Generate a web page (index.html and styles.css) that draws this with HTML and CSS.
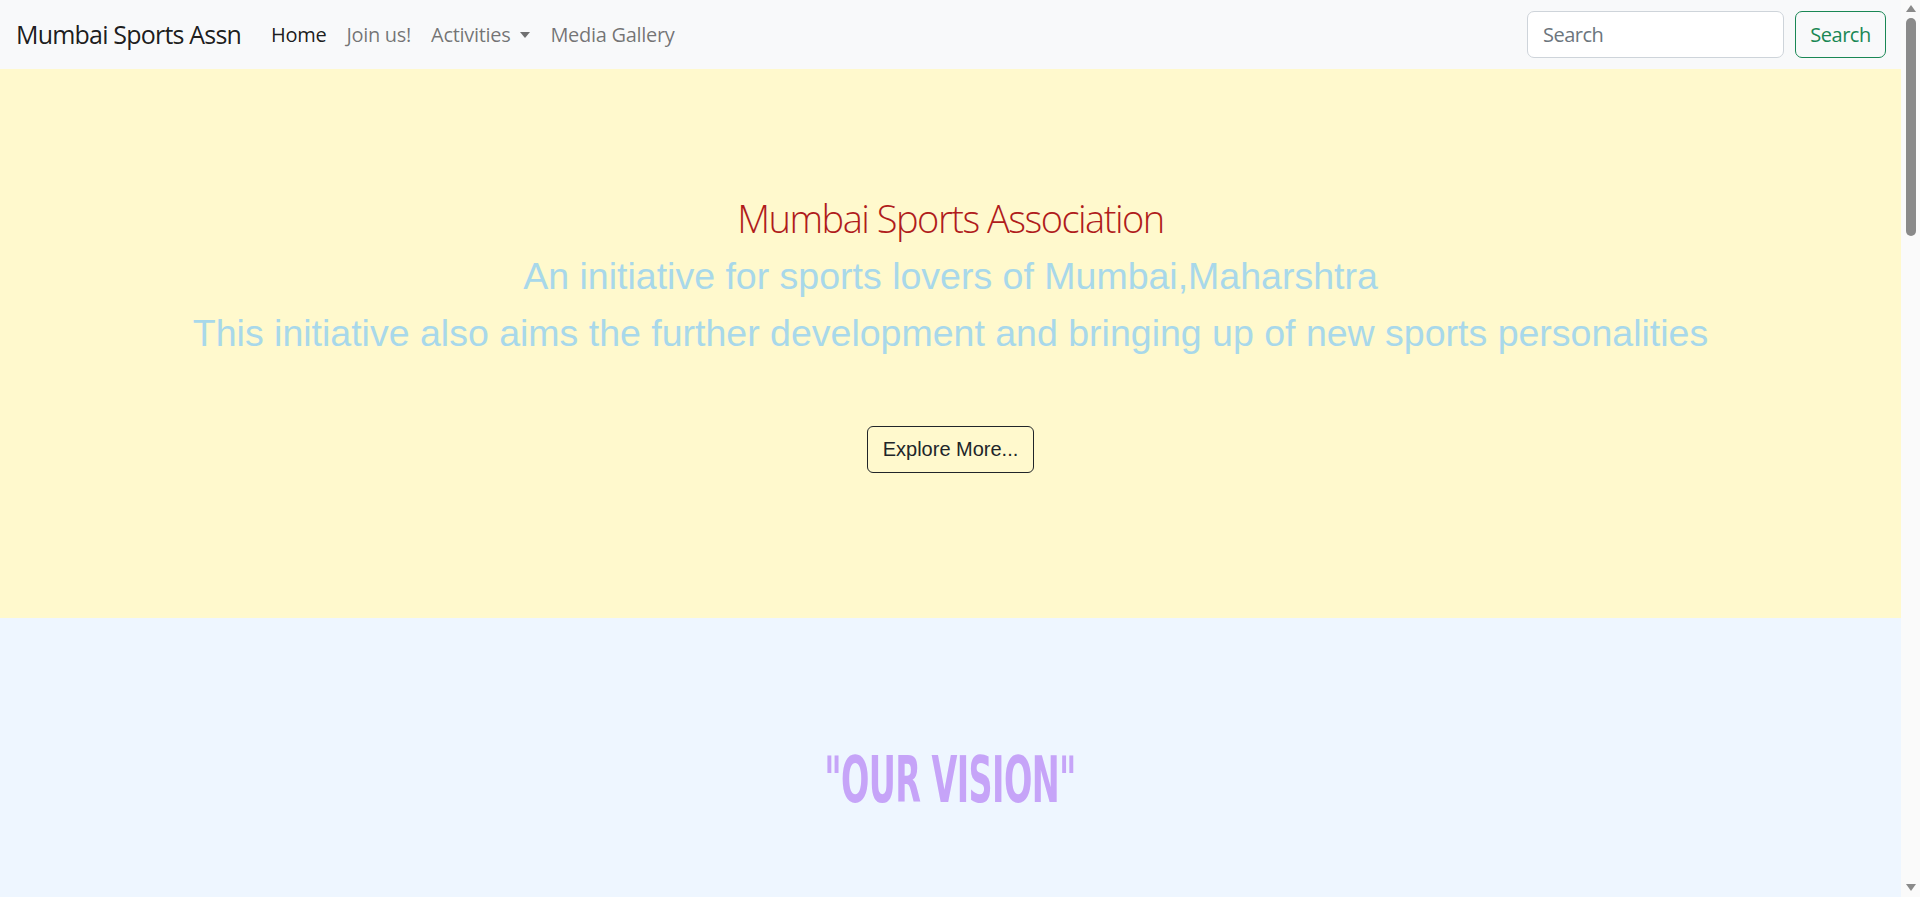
FILE: index.html
```html
<!DOCTYPE html>
<html lang="en">
<head>
<meta charset="utf-8">
<title>Mumbai Sports Assn</title>
<link rel="stylesheet" href="styles.css">
</head>
<body>
<div class="page">
  <nav class="navbar">
    <div class="nav-left">
      <a class="brand" href="#">Mumbai Sports Assn</a>
      <ul class="nav-links">
        <li><a class="nav-link active" href="#">Home</a></li>
        <li><a class="nav-link" href="#">Join us!</a></li>
        <li><a class="nav-link dropdown" href="#">Activities</a></li>
        <li><a class="nav-link" href="#">Media Gallery</a></li>
      </ul>
    </div>
    <form class="search-form">
      <input class="search-input" type="search" placeholder="Search">
      <button class="search-btn" type="button">Search</button>
    </form>
  </nav>

  <section class="hero">
    <h1 class="hero-title">Mumbai Sports Association</h1>
    <p class="hero-line">An initiative for sports lovers of Mumbai,Maharshtra</p>
    <p class="hero-line">This initiative also aims the further development and bringing up of new sports personalities</p>
    <button class="explore-btn" type="button">Explore More...</button>
  </section>

  <section class="vision">
    <h2 class="vision-title"><span class="vision-text">"OUR VISION"</span></h2>
  </section>
</div>
<aside class="scrollbar" aria-hidden="true">
  <span class="sb-arrow sb-up"></span>
  <span class="sb-thumb"></span>
  <span class="sb-spacer"></span>
  <span class="sb-arrow sb-down"></span>
</aside>
</body>
</html>
```

FILE: styles.css
```css
* { box-sizing: border-box; }

html, body {
  margin: 0;
  padding: 0;
}

body {
  display: flex;
  align-items: flex-start;
  font-family: "Open Sans", "Noto Sans", sans-serif;
  color: #212529;
  background: #ffffff;
}

.page {
  flex: 1;
  min-width: 0;
}

/* fake browser scrollbar */
.scrollbar {
  position: sticky;
  top: 0;
  flex: none;
  width: 19px;
  height: 100vh;
  background: #fafafa;
  display: flex;
  flex-direction: column;
  align-items: center;
  padding: 5px 0 6px;
}

.sb-arrow {
  width: 0;
  height: 0;
  border-left: 5px solid transparent;
  border-right: 5px solid transparent;
}

.sb-up {
  border-bottom: 7px solid #8a8a8a;
}

.sb-down {
  border-top: 7px solid #8a8a8a;
}

.sb-thumb {
  margin-top: 6px;
  width: 10px;
  height: 218px;
  border-radius: 5px;
  background: #8a8a8a;
}

.sb-spacer {
  flex: 1;
}

.navbar {
  height: 69px;
  background: #f8f9fa;
  display: flex;
  align-items: center;
  justify-content: space-between;
  padding: 0 15px 0 16px;
}

.nav-left {
  display: flex;
  align-items: center;
}

.brand {
  font-size: 25px;
  line-height: 37px;
  color: rgba(0, 0, 0, 0.9);
  text-decoration: none;
  margin-right: 20px;
  letter-spacing: -0.8px;
}

.nav-links {
  list-style: none;
  display: flex;
  margin: 0;
  padding: 0;
}

.nav-link {
  display: inline-flex;
  align-items: center;
  font-size: 20px;
  line-height: 30px;
  padding: 0 10px;
  color: rgba(0, 0, 0, 0.55);
  text-decoration: none;
  letter-spacing: -0.3px;
}

.nav-link.active {
  color: rgba(0, 0, 0, 0.9);
}

.nav-link.dropdown::after {
  content: "";
  display: inline-block;
  margin-left: 10px;
  border-top: 6px solid rgba(0, 0, 0, 0.55);
  border-left: 5.5px solid transparent;
  border-right: 5.5px solid transparent;
}

.search-form {
  display: flex;
  align-items: center;
  gap: 11px;
}

.search-input {
  width: 257px;
  height: 47px;
  border: 1px solid #ced4da;
  border-radius: 7px;
  background: #fff;
  padding: 0 15px;
  font-family: "Open Sans", "Noto Sans", sans-serif;
  font-size: 20px;
  color: #212529;
  letter-spacing: -0.5px;
}

.search-input::placeholder {
  color: #6c757d;
}

.search-btn {
  height: 47px;
  width: 91px;
  border: 1px solid #198754;
  border-radius: 7px;
  background: transparent;
  color: #198754;
  font-family: "Open Sans", "Noto Sans", sans-serif;
  font-size: 20px;
  letter-spacing: -0.5px;
  padding: 0;
}

.hero {
  background: #fff9cd;
  height: 549px;
  padding-top: 125px;
  text-align: center;
}

.hero-title {
  margin: 0 0 12px;
  font-family: "Open Sans", Lato, sans-serif;
  font-weight: 300;
  font-size: 38px;
  line-height: 49px;
  color: #b01c1c;
  letter-spacing: -1.5px;
}

.hero-line {
  margin: 0 0 12px;
  font-family: "Liberation Sans", Arial, sans-serif;
  font-size: 37.5px;
  line-height: 45px;
  color: #a8d8ea;
}

.hero-title + .hero-line {
  margin-top: -1px;
}

.explore-btn {
  margin-top: 58px;
  height: 47px;
  padding: 0 15px;
  font-family: "Liberation Sans", Arial, sans-serif;
  font-size: 20px;
  color: #212529;
  background: transparent;
  border: 1px solid #212529;
  border-radius: 6px;
}

.vision {
  background: #eef6ff;
  min-height: 2922px;
  padding-top: 123px;
  text-align: center;
}

.vision-title {
  margin: 0;
  font-family: "DejaVu Sans Condensed", "DejaVu Sans", sans-serif;
  font-weight: bold;
  font-size: 64px;
  line-height: 78px;
  color: #c6a4f8;
}

.vision-text {
  display: inline-block;
  transform: scaleX(0.58);
  letter-spacing: -1px;
}
```
